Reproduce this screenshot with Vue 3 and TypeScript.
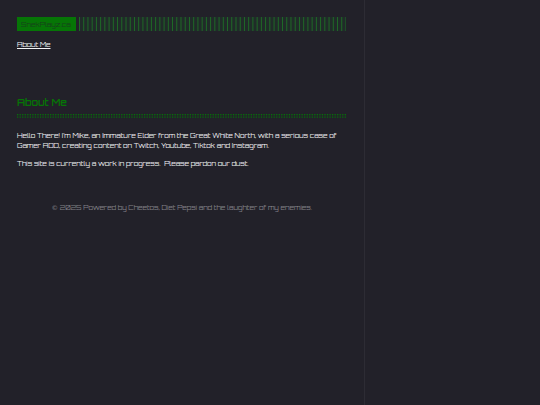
<script setup lang="ts">
const siteName: string = 'SnekPlayz.ca'
const introLines: string[] = [
  'Hello There! I’m Mike, an Immature Elder from the Great White North, with a serious case of',
  'Gamer ADD, creating content on Twitch, Youtube, Tiktok and Instagram.',
]
const stripeStep: number = 4.23
const stripes: number[] = Array.from({ length: 64 }, (_, i) => i * stripeStep)
const dotStep: number = 2.54
const dots: number[] = Array.from({ length: 130 }, (_, i) => i * dotStep)
</script>

<template>
  <div class="page">
    <div class="container">
      <header class="header">
        <div class="brand">
          <a class="logo"><span>{{ siteName }}</span></a>
          <svg class="stripes" width="267" height="14">
            <rect v-for="x in stripes" :key="x" :x="x" y="0" width="0.95" height="14" />
          </svg>
        </div>
        <nav class="menu"><a>About Me</a></nav>
      </header>
      <main class="content">
        <h1>About Me</h1>
        <svg class="dots" width="331" height="4">
          <template v-for="x in dots" :key="x">
            <rect :x="x" y="0" width="1.3" height="1.4" />
            <rect :x="x" y="2.5" width="1.3" height="1.2" />
          </template>
        </svg>
        <p class="intro">
          <span v-for="(line, i) in introLines" :key="i" class="line">{{ line }}</span>
        </p>
        <p class="notice">This site is currently a work in progress.&nbsp; Please pardon our dust.</p>
      </main>
      <footer class="footer">© 2025 Powered by Cheetos, Diet Pepsi and the laughter of my enemies.</footer>
    </div>
  </div>
</template>

<style>
body {
  background: #222129;
}
</style>

<style scoped>
.page {
  min-height: 405px;
  background: #222129;
  font-family: Orbitron, "DejaVu Sans", sans-serif;
  font-size: 6.5px;
  color: #f4f4f6;
}
.container {
  box-sizing: border-box;
  width: 365px;
  min-height: 405px;
  padding: 17px 17px 0;
  border-right: 1px solid #2d2c34;
}
.brand {
  display: flex;
  gap: 3px;
  width: 330px;
  height: 14px;
}
.logo {
  box-sizing: border-box;
  width: 59px;
  padding-left: 4px;
  background: #067506;
  color: #17401c;
  font-size: 6.55px;
  line-height: 15px;
  white-space: nowrap;
}
.stripes {
  display: block;
  background: #202b29;
  fill: #1f6c27;
}
.menu {
  display: flex;
  height: 10px;
  margin-top: 9px;
  line-height: 10px;
}
.menu a {
  text-decoration: underline;
  text-underline-offset: 1px;
  white-space: nowrap;
}
h1 {
  margin: 46px 0 0;
  height: 13px;
  font-size: 9.65px;
  font-weight: 600;
  line-height: 13px;
  color: #067506;
}
.dots {
  display: block;
  margin-top: 5px;
  fill: #076f0b;
}
.intro,
.notice {
  margin: 0;
  white-space: nowrap;
}
.intro {
  margin-top: 13px;
}
.line {
  display: block;
  height: 10.4px;
  line-height: 10.4px;
}
.notice {
  margin-top: 7px;
  line-height: 10px;
}
.footer {
  margin-top: 34px;
  padding-left: 34.6px;
  line-height: 10px;
  color: #85848a;
  white-space: nowrap;
}
</style>
